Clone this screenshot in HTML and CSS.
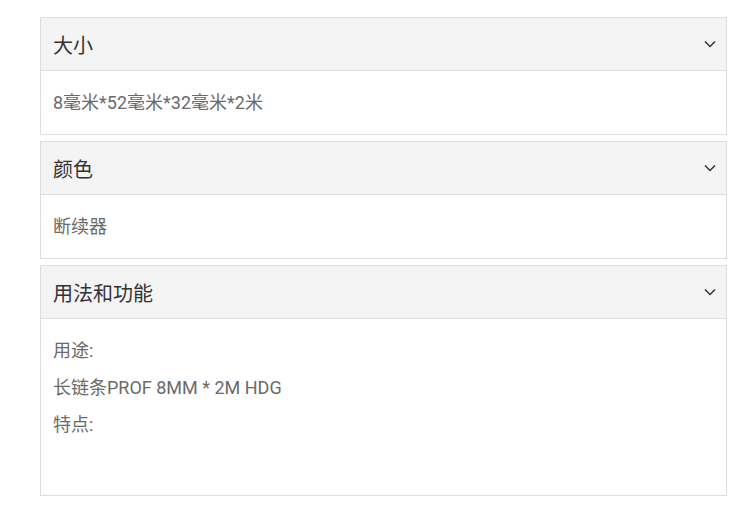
FILE: index.html
```html
<!DOCTYPE html>
<html lang="zh-CN">

<head>
    <meta charset="UTF-8">
    <meta name="viewport" content="width=device-width, initial-scale=1.0">
    <title>产品参数</title>
    <link rel="stylesheet" href="styles.css">
</head>

<body>
    <main class="specs">
        <section class="panel">
            <div class="panel-head">
                <h3>大小</h3>
                <svg class="chevron" width="12" height="8" viewBox="0 0 12 8"><path d="M1 1.5 L6 6.5 L11 1.5" fill="none" stroke="#333" stroke-width="1.5"/></svg>
            </div>
            <div class="panel-body">
                <p>8毫米*52毫米*32毫米*2米</p>
            </div>
        </section>

        <section class="panel">
            <div class="panel-head">
                <h3>颜色</h3>
                <svg class="chevron" width="12" height="8" viewBox="0 0 12 8"><path d="M1 1.5 L6 6.5 L11 1.5" fill="none" stroke="#333" stroke-width="1.5"/></svg>
            </div>
            <div class="panel-body">
                <p>断续器</p>
            </div>
        </section>

        <section class="panel">
            <div class="panel-head">
                <h3>用法和功能</h3>
                <svg class="chevron" width="12" height="8" viewBox="0 0 12 8"><path d="M1 1.5 L6 6.5 L11 1.5" fill="none" stroke="#333" stroke-width="1.5"/></svg>
            </div>
            <div class="panel-body panel-body-long">
                <p>用途:</p>
                <p>长链条PROF 8MM * 2M HDG</p>
                <p>特点:</p>
                <p>&nbsp;</p>
            </div>
        </section>
    </main>
</body>

</html>
```

FILE: styles.css
```css
body {
    font-family: Roboto, "Noto Sans CJK SC", sans-serif;
    margin: 0;
    padding: 0;
    background-color: #fff;
}

.specs {
    margin: 17px 19px 0 40px;
}

.panel {
    border: 1px solid #ddd;
    margin-bottom: 6px;
    background-color: #fff;
}

.panel-head {
    display: flex;
    align-items: center;
    justify-content: space-between;
    height: 52px;
    padding: 0 10px 0 12px;
    background-color: #f4f4f4;
    border-bottom: 1px solid #ddd;
}

.panel-head h3 {
    margin: 0;
    font-size: 20px;
    font-weight: normal;
    color: #333;
}

.chevron {
    display: block;
}

.panel-body {
    padding: 8px 12px;
}

.panel-body-long {
    padding-bottom: 10px;
}

.panel-body p {
    margin: 10px 0;
    font-size: 18px;
    line-height: 27px;
    color: #6a6a6a;
}
```
